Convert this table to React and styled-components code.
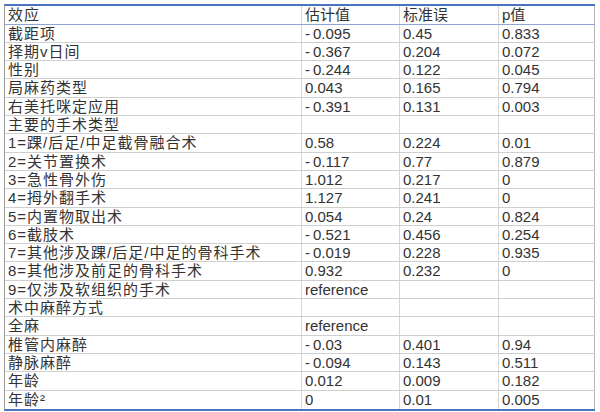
import React from "react";
import styled, { createGlobalStyle } from "styled-components";

const GlobalStyle = createGlobalStyle`
  html, body {
    margin: 0;
    padding: 0;
    background: #ffffff;
  }
  body {
    font-family: "Liberation Sans", "Noto Sans CJK SC", sans-serif;
    color: #333333;
  }
`;

const Page = styled.div`
  width: 600px;
  height: 412px;
  padding: 4px 0 0 4px;
  box-sizing: border-box;
  background: #ffffff;
`;

const Table = styled.div`
  width: 591px;
  border-top: 2px solid #4a74c0;
  border-bottom: 2px solid #4a74c0;
  border-left: 1px solid #9a9a9a;
  box-sizing: border-box;
`;

const Row = styled.div`
  display: grid;
  grid-template-columns: 297px 98px 99px 96px;
  height: ${(p) => (p.$head ? "18.6px" : "18.3px")};
  box-sizing: border-box;
  border-bottom: 1px solid ${(p) => (p.$head ? "#8fa6d4" : "#cfcfcf")};

  &:last-child {
    border-bottom: none;
  }
`;

const Cell = styled.div`
  padding: 0 0 0 3px;
  border-right: 1px solid ${(p) => (p.$last ? "#b8b8b8" : "#d6d6d6")};
  font-size: 15px;
  line-height: 18px;
  white-space: nowrap;
  overflow: hidden;
  letter-spacing: ${(p) => (p.$label ? "1px" : "0")};
  color: #333333;
`;

const rows = [
  ["截距项", "-0.095", "0.45", "0.833"],
  ["择期v日间", "-0.367", "0.204", "0.072"],
  ["性别", "-0.244", "0.122", "0.045"],
  ["局麻药类型", "0.043", "0.165", "0.794"],
  ["右美托咪定应用", "-0.391", "0.131", "0.003"],
  ["主要的手术类型", "", "", ""],
  ["1=踝/后足/中足截骨融合术", "0.58", "0.224", "0.01"],
  ["2=关节置换术", "-0.117", "0.77", "0.879"],
  ["3=急性骨外伤", "1.012", "0.217", "0"],
  ["4=拇外翻手术", "1.127", "0.241", "0"],
  ["5=内置物取出术", "0.054", "0.24", "0.824"],
  ["6=截肢术", "-0.521", "0.456", "0.254"],
  ["7=其他涉及踝/后足/中足的骨科手术", "-0.019", "0.228", "0.935"],
  ["8=其他涉及前足的骨科手术", "0.932", "0.232", "0"],
  ["9=仅涉及软组织的手术", "reference", "", ""],
  ["术中麻醉方式", "", "", ""],
  ["全麻", "reference", "", ""],
  ["椎管内麻醉", "-0.03", "0.401", "0.94"],
  ["静脉麻醉", "-0.094", "0.143", "0.511"],
  ["年龄", "0.012", "0.009", "0.182"],
  ["年龄²", "0", "0.01", "0.005"],
];

// minus signs in the sheet render with a bit of air after them
const fmt = (v) => (v.startsWith("-") ? v.replace("-", "-\u2009") : v);

export default function App() {
  return (
    <>
      <GlobalStyle />
      <Page>
        <Table>
          <Row $head>
            <Cell $label>效应</Cell>
            <Cell>估计值</Cell>
            <Cell>标准误</Cell>
            <Cell $last>p值</Cell>
          </Row>
          {rows.map(([label, est, se, p], i) => (
            <Row key={i}>
              <Cell $label>{label}</Cell>
              <Cell>{fmt(est)}</Cell>
              <Cell>{se}</Cell>
              <Cell $last>{p}</Cell>
            </Row>
          ))}
        </Table>
      </Page>
    </>
  );
}
